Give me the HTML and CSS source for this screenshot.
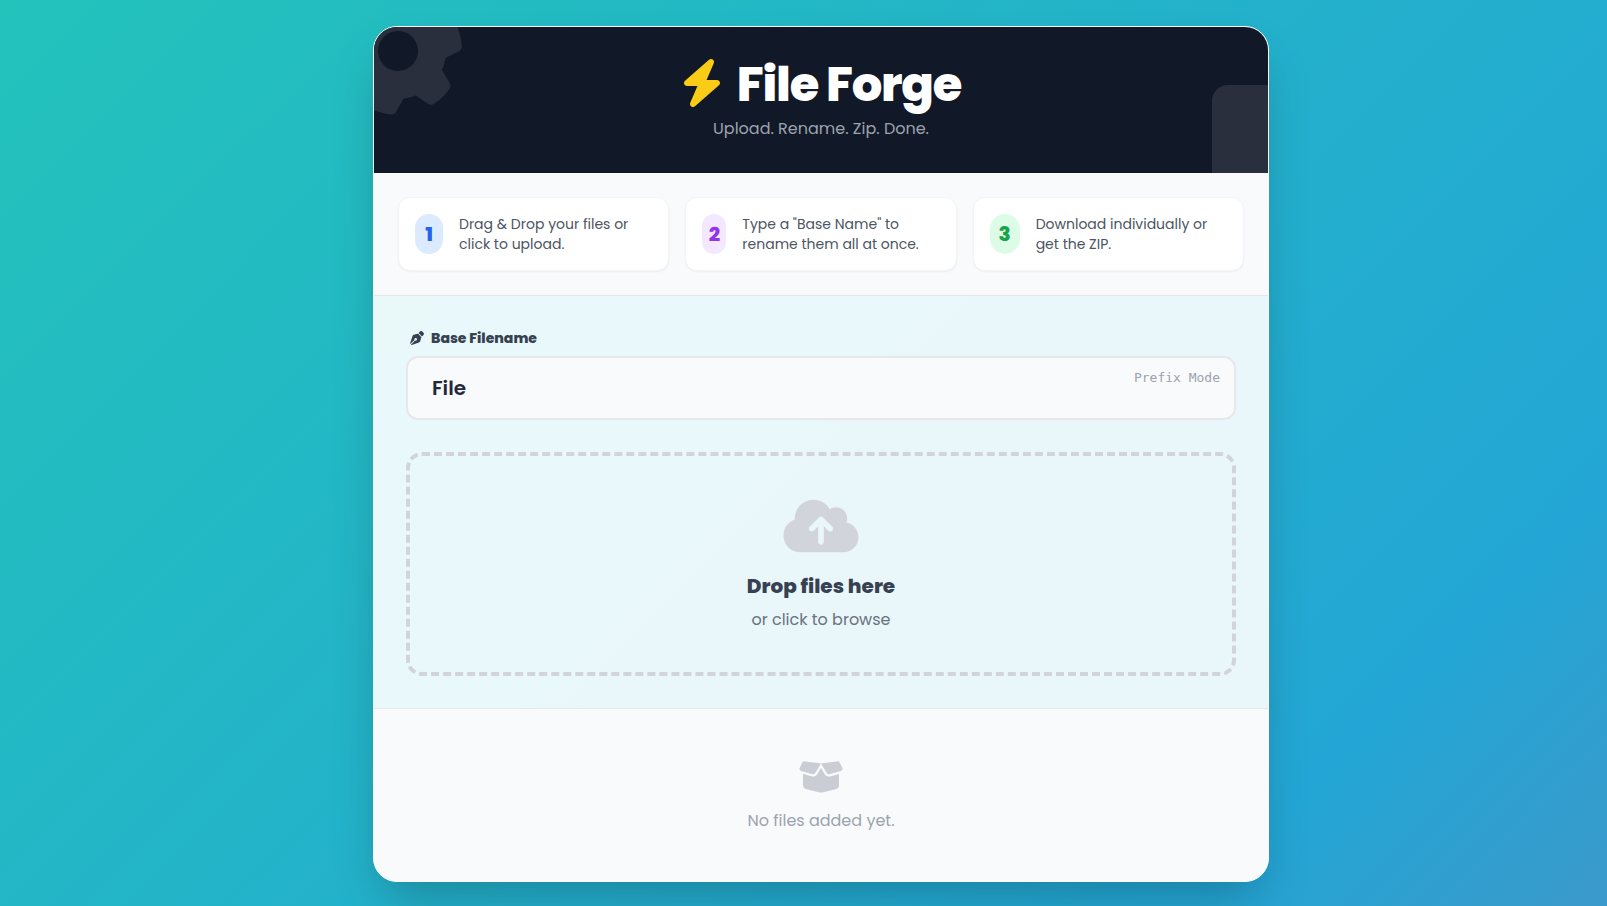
FILE: index.html
```html
<!DOCTYPE html>
<html lang="en">
<head>
<meta charset="utf-8">
<meta name="viewport" content="width=device-width, initial-scale=1">
<title>File Forge</title>
<link rel="stylesheet" href="styles.css">
</head>
<body>
<main class="card">
  <header class="hero">
    <svg class="hero-gear" viewBox="0 0 512 512" aria-hidden="true"><path d="M495.9 166.6c3.2 8.7 .5 18.4-6.4 24.6l-43.3 39.4c1.1 8.3 1.7 16.8 1.7 25.4s-.6 17.1-1.7 25.4l43.3 39.4c6.9 6.2 9.6 15.9 6.4 24.6c-4.4 11.9-9.7 23.3-15.8 34.3l-4.7 8.1c-6.6 11-14 21.4-22.1 31.2c-5.9 7.2-15.7 9.6-24.5 6.8l-55.7-17.7c-13.4 10.3-28.2 18.9-44 25.4l-12.5 57.1c-2 9.1-9 16.3-18.2 17.8c-13.8 2.3-28 3.5-42.5 3.5s-28.7-1.2-42.5-3.5c-9.2-1.5-16.2-8.7-18.2-17.8l-12.5-57.1c-15.8-6.5-30.6-15.1-44-25.4L83.1 425.9c-8.8 2.8-18.6 .3-24.5-6.8c-8.1-9.8-15.5-20.2-22.1-31.2l-4.7-8.1c-6.1-11-11.4-22.4-15.8-34.3c-3.2-8.7-.5-18.4 6.4-24.6l43.3-39.4C64.6 273.1 64 264.6 64 256s.6-17.1 1.7-25.4L22.4 191.2c-6.9-6.2-9.6-15.9-6.4-24.6c4.4-11.9 9.7-23.3 15.8-34.3l4.7-8.1c6.6-11 14-21.4 22.1-31.2c5.9-7.2 15.7-9.6 24.5-6.8l55.7 17.7c13.4-10.3 28.2-18.9 44-25.4l12.5-57.1c2-9.1 9-16.3 18.2-17.8C227.3 1.2 241.5 0 256 0s28.7 1.2 42.5 3.5c9.2 1.5 16.2 8.7 18.2 17.8l12.5 57.1c15.8 6.5 30.6 15.1 44 25.4l55.7-17.7c8.8-2.8 18.6-.3 24.5 6.8c8.1 9.8 15.5 20.2 22.1 31.2l4.7 8.1c6.1 11 11.4 22.4 15.8 34.3zM256 336a80 80 0 1 0 0-160 80 80 0 1 0 0 160z"/></svg>
    <svg class="hero-file" viewBox="0 0 384 512" aria-hidden="true"><path d="M64 0C28.7 0 0 28.7 0 64V448c0 35.3 28.7 64 64 64H320c35.3 0 64-28.7 64-64V160H256c-17.7 0-32-14.3-32-32V0H64zM256 0V128H384L256 0z"/></svg>
    <h1 class="hero-title">
      <svg class="hero-bolt" viewBox="0 0 448 512" aria-hidden="true"><path d="M349.4 44.6c5.9-13.7 1.5-29.7-10.6-38.5s-28.6-8-39.9 1.8l-256 224c-10 8.8-13.6 22.9-8.9 35.3S50.7 288 64 288H175.5L98.6 467.4c-5.9 13.7-1.5 29.7 10.6 38.5s28.6 8 39.9-1.8l256-224c10-8.8 13.6-22.9 8.9-35.3s-16.6-20.7-30-20.7H272.5L349.4 44.6z"/></svg>
      <span>File Forge</span>
    </h1>
    <p class="hero-tagline">Upload. Rename. Zip. Done.</p>
  </header>

  <ol class="steps">
    <li class="step"><span class="badge badge-blue">1</span><p>Drag &amp; Drop your files or<br>click to upload.</p></li>
    <li class="step"><span class="badge badge-purple">2</span><p>Type a "Base Name" to<br>rename them all at once.</p></li>
    <li class="step"><span class="badge badge-green">3</span><p>Download individually or<br>get the ZIP.</p></li>
  </ol>

  <section class="workspace">
    <label class="name-label" for="base-name">
      <svg class="nib" viewBox="0 0 512 512" aria-hidden="true"><path d="M368.4 18.3L312.7 74.1 437.9 199.3l55.7-55.7c21.9-21.9 21.9-57.3 0-79.2L447.6 18.3c-21.9-21.9-57.3-21.9-79.2 0zM288 94.6l-9.2 2.8L134.7 140.6c-19.9 6-35.7 21.2-42.3 41L3.8 445.8c-3.8 11.3-1 23.9 7.3 32.4L164.7 324.7c-3-6.3-4.7-13.3-4.7-20.7c0-26.5 21.5-48 48-48s48 21.5 48 48s-21.5 48-48 48c-7.4 0-14.4-1.7-20.7-4.7L33.7 500.9c8.6 8.3 21.1 11.2 32.4 7.3l264.3-88.6c19.7-6.6 35-22.4 41-42.3l43.2-144.1 2.7-9.2L288 94.6z"/></svg>
      <span>Base Filename</span>
    </label>
    <div class="name-field">
      <input class="name-input" id="base-name" type="text" value="File">
      <span class="name-mode">Prefix Mode</span>
    </div>
    <button class="dropzone" type="button">
      <svg class="cloud" viewBox="0 0 640 512" aria-hidden="true"><path d="M144 480C64.5 480 0 415.5 0 336c0-62.8 40.2-116.2 96.2-135.9c-.1-2.7-.2-5.4-.2-8.1c0-88.4 71.6-160 160-160c59.3 0 111 32.2 138.7 80.2C409.9 102 428.3 96 448 96c53 0 96 43 96 96c0 12.2-2.3 23.8-6.4 34.6C596 238.4 640 290.1 640 352c0 70.7-57.3 128-128 128H144zm79-217c-9.4 9.4-9.4 24.6 0 33.9s24.6 9.4 33.9 0l39-39V392c0 13.3 10.7 24 24 24s24-10.7 24-24V257.9l39 39c9.4 9.4 24.6 9.4 33.9 0s9.4-24.6 0-33.9l-80-80c-9.4-9.4-24.6-9.4-33.9 0l-80 80z"/></svg>
      <span class="drop-title">Drop files here</span>
      <span class="drop-hint">or click to browse</span>
    </button>
  </section>

  <section class="empty">
    <svg class="box" viewBox="0 0 640 512" aria-hidden="true"><path d="M58.9 42.1c3-6.1 9.6-9.6 16.3-8.7L320 64 564.8 33.4c6.7-.8 13.3 2.7 16.3 8.7l41.7 83.4c9 17.9-.6 39.6-19.8 45.1L439.6 217.3c-13.9 4-28.8-1.9-36.2-14.3L320 64 236.6 203c-7.4 12.4-22.3 18.3-36.2 14.3L37.1 170.6c-19.3-5.5-28.8-27.2-19.8-45.1L58.9 42.1zM321.1 128l54.9 91.4c14.9 24.8 44.6 36.6 72.5 28.6L576 211.6v167c0 22-15 41.2-36.4 46.6l-204.1 51c-10.2 2.6-20.9 2.6-31 0l-204.1-51C79 419.7 64 400.5 64 378.5v-167L191.6 248c27.8 8 57.6-3.8 72.5-28.6L318.9 128h2.2z"/></svg>
    <p>No files added yet.</p>
  </section>
</main>
</body>
</html>
```
FILE: styles.css
```css
*, *::before, *::after { box-sizing: border-box; }

body {
  margin: 0;
  min-height: 100vh;
  padding: 18px 16px 16px 51px;
  display: flex;
  align-items: center;
  justify-content: center;
  font-family: Poppins, Inter, "Open Sans", sans-serif;
  font-size: 16px;
  line-height: 24px;
  background: linear-gradient(-45deg, #ee7752, #e73c7e, #23a6d5, #23d5ab) 0 50% / 420% 400%;
}

h1, p, ol { margin: 0; padding: 0; }
svg { display: block; fill: currentColor; flex: none; }

.card {
  width: 100%;
  max-width: 896px;
  overflow: hidden;
  border: 1px solid #fff;
  border-radius: 24px;
  background: rgba(255, 255, 255, 0.9);
  box-shadow: 0 25px 50px -12px rgba(0, 0, 0, 0.25);
}

.hero {
  position: relative;
  overflow: hidden;
  padding: 32px;
  text-align: center;
  color: #fff;
  background: #111827;
}
.hero-gear, .hero-file { position: absolute; height: 128px; color: #292f3d; }
.hero-gear { width: 128px; top: -40px; left: -40px; transform: rotate(16deg); }
.hero-file { width: 96px; right: -40px; bottom: -40px; }
.hero-title {
  display: flex;
  align-items: flex-start;
  justify-content: center;
  gap: 14px;
  margin-bottom: 6px;
  font-size: 48px;
  line-height: 52px;
  font-weight: 800;
  letter-spacing: -0.025em;
}
.hero-bolt { width: 42px; height: 48px; color: #facc15; }
.hero-tagline { color: #9ca3af; }

.steps {
  display: grid;
  grid-template-columns: repeat(3, 1fr);
  gap: 16px;
  padding: 24px;
  list-style: none;
  background: #f9fafb;
  border-bottom: 1px solid #e5e7eb;
}
.step {
  display: flex;
  align-items: center;
  gap: 16px;
  padding: 16px;
  border: 1px solid #f3f4f6;
  border-radius: 12px;
  background: #fff;
  box-shadow: 0 1px 2px rgba(0, 0, 0, 0.05);
  color: #4b5563;
  font-size: 14px;
  line-height: 20px;
  white-space: nowrap;
}
.badge {
  flex: none;
  height: 40px;
  border-radius: 50px;
  text-align: center;
  font-size: 20px;
  line-height: 40px;
  font-weight: 800;
}
.badge-blue { width: 28px; background: #dbeafe; color: #2563eb; }
.badge-purple { width: 24px; background: #f3e8ff; color: #9333ea; }
.badge-green { width: 30px; background: #dcfce7; color: #16a34a; }

.workspace { padding: 32px; }
.name-label {
  display: flex;
  align-items: center;
  gap: 7px;
  margin: 0 0 8px 4px;
  color: #374151;
  font-size: 14px;
  line-height: 20px;
  font-weight: 800;
}
.nib { width: 14px; height: 14px; }
.name-field { position: relative; margin-bottom: 32px; }
.name-input {
  display: block;
  width: 100%;
  height: 64px;
  padding: 16px 24px;
  border: 2px solid #e5e7eb;
  border-radius: 12px;
  background: #f9fafb;
  color: #1f2937;
  font: inherit;
  font-size: 20px;
  font-weight: 600;
}
.name-mode {
  position: absolute;
  top: 12px;
  right: 16px;
  color: #9ca3af;
  font-family: "DejaVu Sans Mono", monospace;
  font-size: 13px;
  line-height: 20px;
}
.dropzone {
  display: flex;
  flex-direction: column;
  align-items: center;
  width: 100%;
  padding: 40px;
  border: 4px dashed #d1d5db;
  border-radius: 16px;
  background: transparent;
  font: inherit;
  cursor: pointer;
}
.cloud { width: 76px; height: 60px; margin-bottom: 16px; color: #d1d5db; }
.drop-title { margin-bottom: 8px; color: #374151; font-size: 20px; line-height: 28px; font-weight: 800; }
.drop-hint { color: #6b7280; }

.empty {
  display: flex;
  flex-direction: column;
  align-items: center;
  gap: 14px;
  padding: 50px 48px 48px;
  border-top: 1px solid #e5e7eb;
  background: #f9fafb;
  color: #9ca3af;
}
.box { width: 46px; height: 36px; opacity: 0.5; }
```
